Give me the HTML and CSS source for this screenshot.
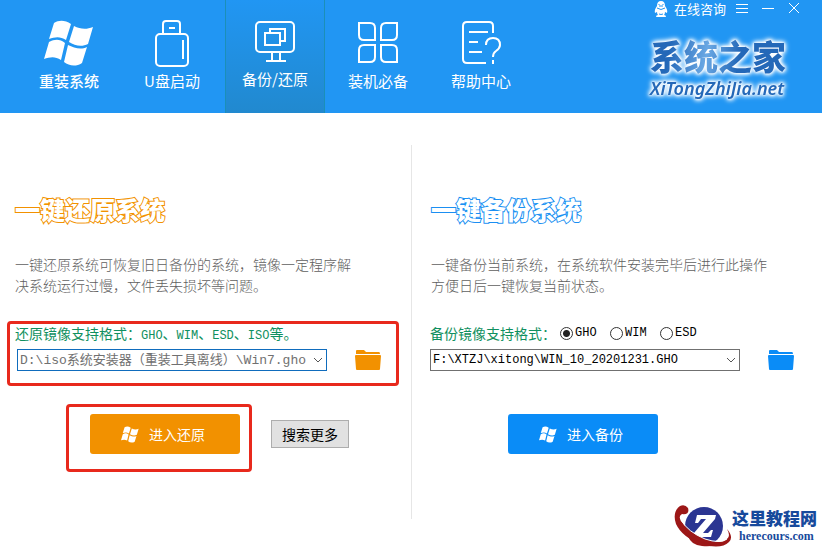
FILE: index.html
```html
<!DOCTYPE html>
<html lang="zh-CN">
<head>
    <meta charset="UTF-8">
    <meta name="viewport" content="width=device-width, initial-scale=1.0">
    <title>系统之家</title>
    <link rel="stylesheet" href="styles.css">
</head>
<body>

<svg class="symbols" aria-hidden="true">
    <symbol id="windows" viewBox="0 0 50 46">
        <path d="M10 3C15 0 21 0 27 4L22 20C16 16 11 17 5 19Z"/>
        <path d="M30 6C36 9 42 10 49 7L44 24C38 27 31 26 25 22Z"/>
        <path d="M5 22C11 19 16 19 21 23L17 40C11 36 6 37 0 39Z"/>
        <path d="M24 25C30 28 37 30 43 27L38 43C32 47 25 46 20 42Z"/>
    </symbol>
    <symbol id="folder" viewBox="0 0 26 22">
        <path d="M1 5V2Q1 1 2 1H9L11 3H24Q25 3 25 5Z"/>
        <path d="M1 6H25Q26 6 26 7L25 20Q25 21 24 21H2Q1 21 1 20L0 7Q0 6 1 6Z"/>
    </symbol>
</svg>

<header class="header">
    <nav class="nav">
        <a class="tab tab-strong" href="#">
            <svg class="tab-icon" viewBox="0 0 50 50"><use href="#windows" y="2" width="50" height="46"/></svg>
            <span>重装系统</span>
        </a>
        <a class="tab" href="#">
            <svg class="tab-icon line" viewBox="0 0 50 50">
                <path d="M16 16V6Q16 3 19 3H30Q33 3 33 6V16M22 10H28M36 22V41"/>
                <rect x="9" y="16" width="32" height="32" rx="4"/>
            </svg>
            <span>U盘启动</span>
        </a>
        <a class="tab active" href="#">
            <svg class="tab-icon line" viewBox="0 0 50 50">
                <rect x="6" y="6" width="38" height="30" rx="4"/>
                <path d="M15 17H30V29H15ZM20 16V13H35V25H31M22 36V45M30 36V45M16 45H36"/>
            </svg>
            <span>备份/还原</span>
        </a>
        <a class="tab" href="#">
            <svg class="tab-icon line" viewBox="0 0 50 50">
                <path d="M6 5H17Q22 5 22 10V22H11Q6 22 6 17ZM44 5V17Q44 22 39 22H28V10Q28 5 33 5ZM22 27V39Q22 44 17 44H6V32Q6 27 11 27ZM28 27H39Q44 27 44 32V44H33Q28 44 28 39Z"/>
            </svg>
            <span>装机必备</span>
        </a>
        <a class="tab" href="#">
            <svg class="tab-icon line" viewBox="0 0 50 50">
                <path d="M30 45H11Q7 45 7 41V8Q7 4 11 4H33Q37 4 37 8V15M13 14H32M13 24H22M13 34H26M30 27Q30 20 37 20Q44 20 44 27Q44 30 40 33Q37 35 37 39M37 42V46"/>
            </svg>
            <span>帮助中心</span>
        </a>
    </nav>
    <div class="header-side">
        <div class="window-bar">
            <a class="consult" href="#">
                <svg width="14" height="16" viewBox="0 0 14 16">
                    <path fill="#fff" d="M7 0Q11 0 11 5Q14 9 13 12L11 11Q11 13 10 14Q12 14 12 16H2Q2 14 4 14Q3 13 3 11L1 12Q0 9 3 5Q3 0 7 0Z"/>
                    <path fill="none" stroke="#2196f3" d="M3 7Q7 10 11 7M5 5H9M5 3V4M9 3V4M5 13Q7 14 9 13"/>
                </svg>
                在线咨询
            </a>
            <button class="window-button" aria-label="菜单"><svg width="12" height="12"><path d="M0 1.5H12M0 5.5H12M0 9.5H12"/></svg></button>
            <button class="window-button" aria-label="最小化"><svg width="12" height="12"><path d="M0 5.5H12"/></svg></button>
            <button class="window-button" aria-label="关闭"><svg width="12" height="12"><path d="M1 0L11 10M11 0L1 10"/></svg></button>
        </div>
        <div class="brand">
            <div class="brand-name">系统之家</div>
            <div class="brand-url">XiTongZhiJia.net</div>
        </div>
    </div>
</header>

<main class="main">
    <section class="panel restore">
        <h1 class="title">一键还原系统</h1>
        <p class="desc">一键还原系统可恢复旧日备份的系统，镜像一定程序解<br>决系统运行过慢，文件丢失损坏等问题。</p>
        <div class="source marked">
            <label class="formats" for="restorePath">还原镜像支持格式：<span class="ext">GHO</span>、<span class="ext">WIM</span>、<span class="ext">ESD</span>、<span class="ext">ISO</span>等。</label>
            <div class="path-row">
                <select class="path" id="restorePath">
                    <option>D:\iso系统安装器（重装工具离线）\Win7.gho</option>
                </select>
                <button class="browse" aria-label="浏览"><svg width="26" height="22"><use href="#folder"/></svg></button>
            </div>
        </div>
        <div class="actions">
            <div class="action-box marked">
                <button class="start"><svg width="18" height="17"><use href="#windows"/></svg>进入还原</button>
            </div>
            <button class="more">搜索更多</button>
        </div>
    </section>

    <section class="panel backup">
        <h1 class="title">一键备份系统</h1>
        <p class="desc">一键备份当前系统，在系统软件安装完毕后进行此操作<br>方便日后一键恢复当前状态。</p>
        <div class="source">
            <div class="formats">
                <label class="formats-label" for="backupPath">备份镜像支持格式：</label>
                <label class="format"><input type="radio" name="format" checked><span class="ext">GHO</span></label>
                <label class="format"><input type="radio" name="format"><span class="ext">WIM</span></label>
                <label class="format"><input type="radio" name="format"><span class="ext">ESD</span></label>
            </div>
            <div class="path-row">
                <select class="path" id="backupPath">
                    <option>F:\XTZJ\xitong\WIN_10_20201231.GHO</option>
                </select>
                <button class="browse" aria-label="浏览"><svg width="26" height="22"><use href="#folder"/></svg></button>
            </div>
        </div>
        <div class="actions">
            <div class="action-box">
                <button class="start"><svg width="18" height="17"><use href="#windows"/></svg>进入备份</button>
            </div>
        </div>
    </section>
</main>

<a class="watermark" href="#">
    <svg width="58" height="42" viewBox="0 0 58 42">
        <circle cx="30" cy="21" r="19" fill="#2b3592"/>
        <path fill="#fff" d="M23 10H42L41 14L29 28H34L37 25H39L37 32H19L20 28L32 14H27L24 18H21Z"/>
        <path fill="#9c1717" d="M14 3Q11 -1 6 1Q-2 7 2 19Q8 32 27 39Q47 45 55 37Q60 32 53 24Q57 31 53 34Q47 40 31 34Q14 27 7 16Q4 11 8 9Q16 10 14 3Z"/>
        <path fill="#9c1717" d="M14 31Q17 40 28 41Q36 42 41 40Q25 38 14 31Z"/>
        <path fill="none" stroke="#fff" d="M7 15Q14 27 31 34Q46 39 53 34"/>
    </svg>
    <span class="watermark-text">
        <span class="watermark-name">这里教程网</span>
        <span class="watermark-url">herecours.com</span>
    </span>
</a>

</body>
</html>
```

FILE: styles.css
```css
* {
    box-sizing: border-box;
}
body {
    margin: 0;
    min-height: 100vh;
    display: flex;
    flex-direction: column;
    position: relative;
    background: #fff;
    font-family: "Liberation Serif", "Noto Sans CJK SC", sans-serif;
    font-size: 14px;
}
button {
    border: none;
    padding: 0;
    background: none;
    font-family: "Noto Sans CJK SC", sans-serif;
    cursor: pointer;
}
a {
    color: inherit;
    text-decoration: none;
}
svg {
    display: block;
}
.symbols {
    position: absolute;
    width: 0;
    height: 0;
}

/* header */
.header {
    display: flex;
    justify-content: space-between;
    background: #2196f3;
    color: #fff;
    font-family: "Noto Sans CJK SC", sans-serif;
}
.nav {
    display: flex;
    gap: 3px;
    padding-left: 19px;
}
.tab {
    width: 100px;
    height: 113px;
    padding-top: 18px;
    display: flex;
    flex-direction: column;
    align-items: center;
    gap: 3px;
    font-size: 15px;
    line-height: 20px;
}
.tab-strong {
    font-weight: 500;
}
.tab.active {
    padding-top: 16px;
    background: linear-gradient(#2196f3, #2189cf);
    box-shadow: inset 1px 0 #1b8fb8, inset -1px 0 #1b8fb8;
}
.tab-icon {
    width: 50px;
    height: 50px;
    fill: #fff;
}
.line {
    fill: none;
    stroke: #fff;
    stroke-width: 2;
}
.header-side {
    display: flex;
    flex-direction: column;
    align-items: flex-end;
    padding-right: 22px;
}
.window-bar {
    display: flex;
    gap: 14px;
    height: 18px;
    align-items: center;
    font-size: 13px;
    line-height: 18px;
}
.consult {
    display: flex;
    align-items: center;
    gap: 6px;
    margin-right: -4px;
}
.window-button svg {
    fill: none;
    stroke: #fff;
}
.brand {
    margin: 17px 14px 0 0;
    filter: drop-shadow(0 0 1px #fff) drop-shadow(0 0 2px #fff) drop-shadow(0 0 2px #fff);
}
.brand-name {
    background: linear-gradient(100deg, #2468b8 15%, #6aa8e4 42%, #2468b8 65%);
    -webkit-background-clip: text;
    background-clip: text;
    color: transparent;
    font-size: 34px;
    font-weight: 900;
    line-height: 42px;
}
.brand-url {
    color: #2468b8;
    font-family: "Noto Sans", sans-serif;
    font-size: 18px;
    font-style: italic;
    font-weight: 600;
    line-height: 22px;
}

/* panels */
.main {
    display: grid;
    grid-template-columns: 1fr 1fr;
    padding: 32px 0 30px;
    flex: 1;
}
.panel {
    padding: 48px 12px 0 7px;
}
.backup {
    padding: 48px 7px 0 11px;
    border-left: 1px solid #e6e6e6;
}
.title {
    margin: 0 8px;
    color: #fff;
    font-family: "Noto Sans CJK SC", sans-serif;
    font-size: 25px;
    font-weight: 900;
    line-height: 32px;
    -webkit-text-stroke: 2px #f29100;
    paint-order: stroke fill;
}
.backup .title {
    -webkit-text-stroke-color: #1b8ff2;
}
.desc {
    margin: 29px 8px 25px;
    color: #606060;
    font-family: "Noto Sans CJK SC", sans-serif;
    font-weight: 300;
    line-height: 21px;
}
.marked {
    border: 3px solid #e8291c;
    border-radius: 4px;
}
.source {
    padding: 0 5px 12px;
}
.source:not(.marked) {
    padding: 3px 7px 15px;
}
.formats {
    display: flex;
    align-items: baseline;
    height: 19px;
    color: #109060;
    font-family: "Noto Sans CJK SC", sans-serif;
    line-height: 19px;
}
.formats-label {
    margin-right: 4px;
}
.ext {
    font-family: "Liberation Mono", monospace;
    font-size: 12px;
}
.format {
    display: flex;
    align-items: center;
    gap: 2px;
    width: 50px;
    color: #000;
}
.format input {
    appearance: none;
    width: 13px;
    height: 13px;
    margin: 0;
    border: 1px solid #333;
    border-radius: 50%;
}
.format input:checked {
    background: radial-gradient(circle, #222 3px, #fff 4px);
}
.backup .formats {
    align-items: center;
}
.path-row {
    display: flex;
    align-items: center;
    gap: 28px;
    margin-top: 6px;
}
.restore .path-row {
    padding-left: 2px;
}
.path {
    appearance: none;
    flex: 0 1 310px;
    min-width: 0;
    height: 22px;
    padding: 0 16px 0 2px;
    border: 1px solid #707070;
    border-radius: 0;
    background: #fff url("data:image/svg+xml,%3Csvg xmlns='http://www.w3.org/2000/svg' width='10' height='6'%3E%3Cpath d='M1 1l4 4 4-4' fill='none' stroke='%23555'/%3E%3C/svg%3E") no-repeat right 3px center;
    color: #000;
    font-family: "Liberation Mono", "Noto Sans CJK SC", monospace;
    font-size: 12px;
}
.restore .path {
    border-color: #0f6cbd;
    color: #707070;
    font-size: 13px;
}
.browse {
    color: #f29100;
}
.browse svg,
.start svg {
    fill: currentColor;
}
.backup .browse {
    color: #0a8cf7;
}
.actions {
    display: flex;
    align-items: center;
    gap: 19px;
    margin: 18px 0 0 59px;
}
.action-box {
    padding: 7px 9px 15px 21px;
}
.action-box:not(.marked) {
    padding: 10px 26px 18px;
}
.start {
    display: flex;
    align-items: center;
    gap: 10px;
    width: 150px;
    height: 40px;
    padding-left: 31px;
    border-radius: 3px;
    background: #f29100;
    color: #fff;
    font-size: 14px;
}
.backup .start {
    background: #0a8cf7;
}
.more {
    width: 78px;
    height: 28px;
    margin-bottom: 8px;
    border: 1px solid #adadad;
    background: #e1e1e1;
    color: #000;
    font-size: 14px;
}

/* site mark laid over the bottom right corner */
.watermark {
    position: absolute;
    right: 5px;
    bottom: 2px;
    display: flex;
    align-items: center;
    color: #174a9c;
}
.watermark-text {
    display: flex;
    flex-direction: column;
}
.watermark-name {
    font-family: "Noto Sans CJK SC", sans-serif;
    font-size: 17px;
    font-weight: 900;
    line-height: 20px;
}
.watermark-url {
    padding-left: 7px;
    font-size: 12px;
    font-weight: bold;
    line-height: 16px;
}
```
